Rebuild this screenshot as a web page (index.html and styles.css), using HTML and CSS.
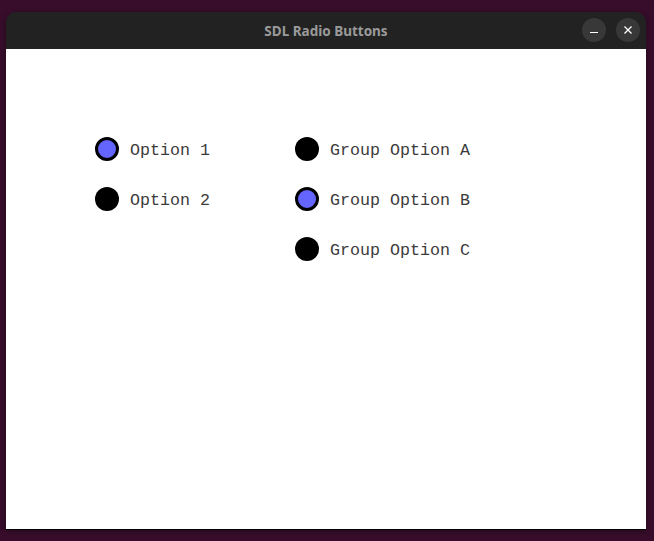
FILE: index.html
```html
<!DOCTYPE html>
<html>
<head>
<meta charset="utf-8">
<title>SDL Radio Buttons</title>
<link rel="stylesheet" href="styles.css">
</head>
<body>
<div class="window">
  <div class="titlebar">
    <div class="title">SDL Radio Buttons</div>
    <div class="controls">
      <div class="ctl">
        <svg width="10" height="10" viewBox="0 0 10 10"><line x1="1" y1="7.5" x2="9" y2="7.5" stroke="#ffffff" stroke-width="1.2"/></svg>
      </div>
      <div class="ctl">
        <svg width="10" height="10" viewBox="0 0 10 10"><path d="M1.5 1.5 L8.5 8.5 M8.5 1.5 L1.5 8.5" stroke="#ffffff" stroke-width="1.3"/></svg>
      </div>
    </div>
  </div>
  <div class="content">
    <div class="group">
      <div class="radio"><span class="dot checked"></span><span class="label">Option 1</span></div>
      <div class="radio"><span class="dot"></span><span class="label">Option 2</span></div>
    </div>
    <div class="group">
      <div class="radio"><span class="dot"></span><span class="label">Group Option A</span></div>
      <div class="radio"><span class="dot checked"></span><span class="label">Group Option B</span></div>
      <div class="radio"><span class="dot"></span><span class="label">Group Option C</span></div>
    </div>
  </div>
</div>
</body>
</html>
```

FILE: styles.css
```css
html, body {
  margin: 0;
  padding: 0;
}
body {
  width: 654px;
  height: 541px;
  background: #380d2b;
  overflow: hidden;
}
.window {
  margin: 12px 0 0 6px;
  width: 640px;
  border-radius: 10px 10px 0 0;
  overflow: hidden;
  box-shadow: 0 1px 0 #000, 0 2px 6px rgba(0,0,0,0.45);
}
.titlebar {
  height: 37px;
  background: #222222;
  display: flex;
  align-items: center;
  justify-content: center;
  position: relative;
}
.title {
  font-family: "Noto Sans", "Open Sans", sans-serif;
  font-weight: 700;
  font-size: 13.5px;
  color: #9a9a9a;
  letter-spacing: 0;
}
.controls {
  position: absolute;
  right: 6px;
  top: 6px;
  display: flex;
  gap: 10px;
}
.ctl {
  width: 24px;
  height: 24px;
  border-radius: 50%;
  background: #383838;
  display: flex;
  align-items: center;
  justify-content: center;
}
.content {
  height: 480px;
  background: #ffffff;
  box-sizing: border-box;
  padding: 88px 0 0 89px;
  display: grid;
  grid-template-columns: 200px 200px;
  align-items: start;
}
.group {
  display: flex;
  flex-direction: column;
  gap: 26px;
}
.radio {
  display: flex;
  align-items: center;
  height: 24px;
  gap: 11px;
}
.dot {
  width: 24px;
  height: 24px;
  border-radius: 50%;
  background: #000000;
  box-sizing: border-box;
  flex: none;
}
.dot.checked {
  background: #6464ff;
  border: 3.5px solid #000000;
}
.label {
  font-family: "Liberation Mono", monospace;
  font-size: 16.67px;
  color: #3c3c3c;
  white-space: pre;
  padding-top: 2px;
}
```
